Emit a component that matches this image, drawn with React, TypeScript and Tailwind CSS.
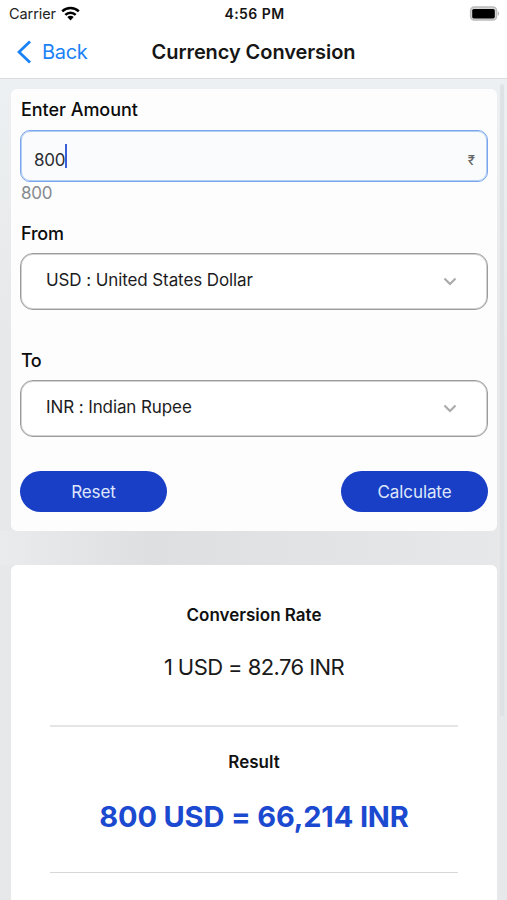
import React from "react";

function WifiIcon() {
  return (
    <svg className="-mt-[2px]" width="19" height="15" viewBox="0 0 19 15" fill="none" stroke="#000" strokeWidth="2.5">
      <path d="M1.2 5.4 C5.8 0.9 13.2 0.9 17.8 5.4" />
      <path d="M4.3 8.8 C7.3 5.9 11.7 5.9 14.7 8.8" />
      <path d="M9.5 14.4 L6.3 11 C8.1 9.4 10.9 9.4 12.7 11 Z" fill="#000" stroke="none" />
    </svg>
  );
}

function BatteryIcon() {
  return (
    <svg className="-mt-[2px]" width="31" height="15" viewBox="0 0 31 15">
      <rect x="1.6" y="1" width="26" height="13" rx="3.6" fill="#d6d6d6" stroke="#bbb" strokeWidth="1.4" />
      <rect x="3.2" y="3" width="22.6" height="9.4" rx="1.6" fill="#000" />
      <path d="M28.8 5.2 C30.6 6 30.6 9 28.8 9.8 Z" fill="#b4b4b4" />
    </svg>
  );
}

function StatusBar() {
  return (
    <div className="flex h-7 items-center pr-[7px] pl-[9px]">
      <div className="flex flex-1 items-center gap-[5px]">
        <span className="text-[14.5px] leading-5 tracking-[-0.08px] text-[#222]">Carrier</span>
        <WifiIcon />
      </div>
      <span className="text-[14px] leading-5 font-semibold tracking-[0.45px] text-[#151515]">4:56 PM</span>
      <div className="flex flex-1 justify-end">
        <BatteryIcon />
      </div>
    </div>
  );
}

function NavBar() {
  return (
    <div className="grid h-[48px] grid-cols-[1fr_auto_1fr] items-center">
      <button className="flex items-center gap-[11px] pl-[17px] text-[#1a82f7]">
        <svg width="14" height="24" viewBox="0 0 14 24" fill="none" stroke="currentColor" strokeWidth="2.8">
          <path d="M13 1.5 L2 12 L13 22.5" />
        </svg>
        <span className="text-[20px] leading-6 tracking-[-0.3px]">Back</span>
      </button>
      <h1 className="text-[20px] leading-6 font-semibold tracking-[-0.08px] text-[#161616]">Currency Conversion</h1>
      <span />
    </div>
  );
}

function Select({ value }: { value: string }) {
  return (
    <button className="flex h-[57px] w-full items-center justify-between rounded-[13px] border border-[#9c9c9c] bg-white pr-[30px] pb-[4px] pl-[25px] text-left shadow-[inset_0_0_0_1px_#d2d2d2]">
      <span className="text-[17px] leading-6 tracking-[-0.1px] text-[#1c1c1e]">{value}</span>
      <svg className="mt-[3px]" width="14" height="9" viewBox="0 0 14 9" fill="none" stroke="#aaa" strokeWidth="2.1">
        <path d="M1.5 1.5 L7 7 L12.5 1.5" />
      </svg>
    </button>
  );
}

function PillButton({ label }: { label: string }) {
  return (
    <button className="h-[41px] w-[147px] rounded-full bg-[#193fc6] text-[17px] leading-6 tracking-[-0.1px] text-[#dfe7fb]">
      {label}
    </button>
  );
}

export default function App() {
  return (
    <div className="relative flex h-[900px] w-[507px] flex-col overflow-hidden bg-[#e7e9ea] font-['Inter','Liberation_Sans',sans-serif] whitespace-nowrap">
      <header className="h-[79px] shrink-0 border-b border-[#d9dbdc] bg-white shadow-[0_1px_2px_rgba(0,0,0,0.06)]">
        <StatusBar />
        <NavBar />
      </header>

      <main className="flex flex-1 flex-col bg-linear-to-b from-[#edf0f2] to-[#e6e8e9] to-30% pt-[10px] pr-[10px] pl-[11px]">
        <section className="h-[442px] shrink-0 rounded-[6px] bg-[#fdfdfe] pr-[9px] pl-[9px]">
          <label className="block h-[41px] pt-[9px] pl-px text-[18px] leading-6 font-medium tracking-[-0.05px] text-[#0c0c0c]">
            Enter Amount
          </label>
          <div className="flex h-[52px] items-center justify-between rounded-[10px] border border-[#78a5ec] bg-[#f9fbfd] pr-[12px] pl-[13px] shadow-[inset_0_0_0_1px_#b4cff6]">
            <div className="flex items-center">
              <span className="pt-[8px] text-[17px] leading-6 tracking-[-0.3px] text-[#2c2e33]">800</span>
              <span className="h-6 w-[2px] bg-[#3b5fd8]" />
            </div>
            <span className="pt-[7px] text-[13px] leading-5 font-medium text-[#666]">₹</span>
          </div>
          <p className="h-[31px] pl-px text-[17px] leading-[22px] tracking-[-0.2px] text-[#85898e]">800</p>
          <label className="block h-[40px] pt-[9px] pl-px text-[18px] leading-6 font-medium tracking-[-0.2px] text-[#0c0c0c]">
            From
          </label>
          <Select value="USD : United States Dollar" />
          <label className="block h-[70px] pt-[39px] pl-px text-[18px] leading-6 font-medium tracking-[-0.5px] text-[#0c0c0c]">
            To
          </label>
          <Select value="INR : Indian Rupee" />
          <div className="mt-[34px] flex justify-between">
            <PillButton label="Reset" />
            <PillButton label="Calculate" />
          </div>
        </section>

        <div className="-mr-[10px] -ml-[11px] h-[34px] shrink-0 bg-linear-to-r from-[#e9ebec] via-[#dddfe0] via-30% to-[#e6e8e9]" />

        <section className="flex h-[400px] shrink-0 flex-col items-center rounded-t-[6px] bg-white px-[39px] text-[#111]">
          <h2 className="mt-[38px] text-[17px] leading-6 font-semibold">Conversion Rate</h2>
          <p className="mt-[24px] text-[22px] leading-8 tracking-[-0.58px] text-[#1a1a1a]">1 USD = 82.76 INR</p>
          <hr className="mt-[42px] w-full border-t-2 border-[#e3e5e6]" />
          <h2 className="mt-[23px] text-[17px] leading-6 font-semibold">Result</h2>
          <p className="mt-[23px] text-[29px] leading-10 font-bold tracking-[-0.15px] text-[#1b49cf]">800 USD = 66,214 INR</p>
          <hr className="mt-[35px] w-full border-t border-[#d5d7d8]" />
        </section>
      </main>

      {/* Scroll indicator over the right edge of the page */}
      <div className="absolute top-[84px] right-[3px] h-[632px] w-[4px] rounded-full bg-[#dfe2e4]" />
    </div>
  );
}
